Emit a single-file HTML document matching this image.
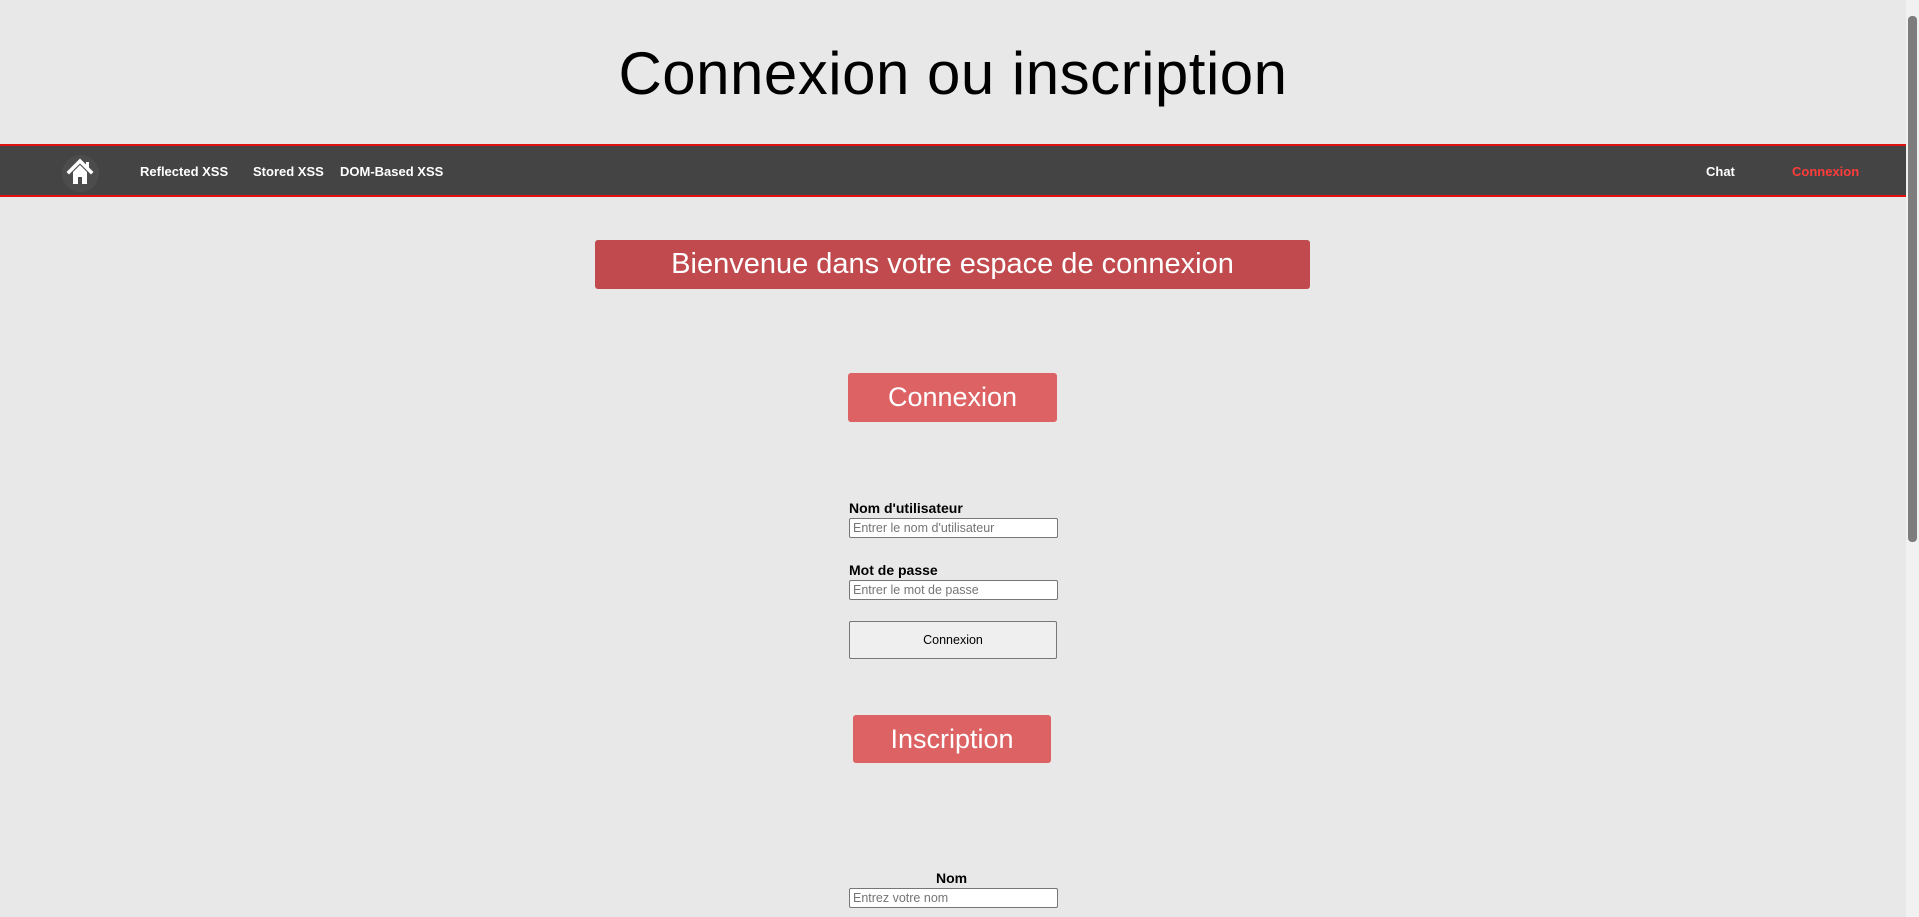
<!DOCTYPE html>
<html><head><meta charset="utf-8"><style>
html,body{margin:0;padding:0;}
body{width:1919px;height:917px;background:#e8e8e8;font-family:"Liberation Sans",sans-serif;position:relative;overflow:hidden;}
.a{position:absolute;}
h1{position:absolute;left:0;width:1906px;top:36px;margin:0;text-align:center;font-weight:normal;font-size:60px;letter-spacing:0.5px;color:#000;line-height:76px;}
.nav{left:0;top:144px;width:1906px;height:49px;background:#444;border-top:2px solid #e01010;border-bottom:2px solid #e01010;}
.nav span{position:absolute;top:18px;color:#fff;font-weight:bold;font-size:13px;}
.box{position:absolute;color:#fff;text-align:center;border-radius:3px;}
.lbl{position:absolute;font-weight:bold;font-size:14px;color:#000;}
.inp{position:absolute;left:849px;width:204px;height:18px;background:#fff;border:1px solid #767676;border-radius:2px;font-size:12.5px;color:#757575;padding-left:3px;line-height:19px;}
</style></head><body>
<h1>Connexion ou inscription</h1>
<div class="a nav">
 <div class="a" style="left:62px;top:9px;width:37px;height:37px;border-radius:50%;background:#4c4c4c"></div>
 <svg class="a" style="left:66px;top:12px" width="28" height="28" viewBox="0 0 28 28"><path d="M3 14 L14 3 L25 14" stroke="#fff" stroke-width="3.5" fill="none" stroke-linecap="square"/><rect x="20" y="4" width="3" height="6" fill="#fff"/><path d="M7 14 L14 7 L21 14 V26 H16 V19 H12 V26 H7 Z" fill="#fff"/></svg>
 <span style="left:140px">Reflected XSS</span>
 <span style="left:253px">Stored XSS</span>
 <span style="left:340px">DOM-Based XSS</span>
 <span style="left:1706px">Chat</span>
 <span style="left:1792px;color:#ff3b3b">Connexion</span>
</div>
<div class="box" style="left:595px;top:240px;width:715px;height:49px;background:#c04a4d;font-size:29px;line-height:49px;">Bienvenue dans votre espace de connexion</div>
<div class="box" style="left:848px;top:373px;width:209px;height:49px;background:#dd6264;font-size:27px;line-height:49px;">Connexion</div>
<div class="lbl" style="left:849px;top:500px">Nom d'utilisateur</div>
<div class="inp" style="top:518px">Entrer le nom d'utilisateur</div>
<div class="lbl" style="left:849px;top:562px">Mot de passe</div>
<div class="inp" style="top:580px">Entrer le mot de passe</div>
<div class="a" style="left:849px;top:621px;width:206px;height:36px;background:#efefef;border:1px solid #767676;border-radius:2px;font-size:12.5px;text-align:center;line-height:37px;">Connexion</div>
<div class="box" style="left:853px;top:715px;width:198px;height:48px;background:#dd6264;font-size:27px;line-height:48px;">Inscription</div>
<div class="lbl" style="left:936px;top:870px">Nom</div>
<div class="inp" style="top:888px">Entrez votre nom</div>
<div class="a" style="left:1906px;top:0;width:13px;height:917px;background:#f1f1f1"></div>
<div class="a" style="left:1908px;top:16px;width:9px;height:526px;background:#7d7d7d;border-radius:4px"></div>
</body></html>
